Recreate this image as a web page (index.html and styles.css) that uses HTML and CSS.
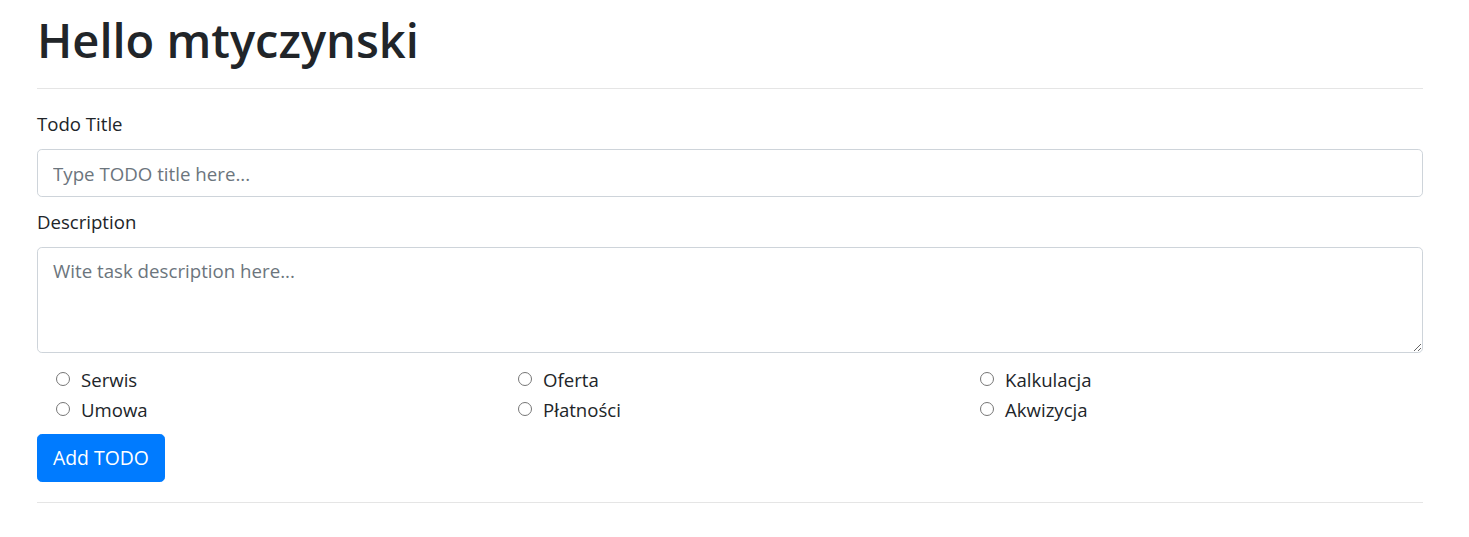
FILE: index.html
```html
<!DOCTYPE html>
<html lang="pl">
<head>
<meta charset="utf-8">
<title>Todo</title>
<link rel="stylesheet" href="styles.css">
</head>
<body>
<div class="container">
  <h1 class="title">Hello mtyczynski</h1>
  <hr class="divider">
  <form class="todo-form">
    <label class="field-label" for="title">Todo Title</label>
    <input class="field-input" id="title" type="text" placeholder="Type TODO title here...">
    <label class="field-label field-label--second" for="desc">Description</label>
    <textarea class="field-input field-textarea" id="desc" placeholder="Wite task description here..."></textarea>
    <div class="radio-grid">
      <label class="radio-item"><input class="radio" type="radio" name="cat"><span>Serwis</span></label>
      <label class="radio-item"><input class="radio" type="radio" name="cat"><span>Oferta</span></label>
      <label class="radio-item"><input class="radio" type="radio" name="cat"><span>Kalkulacja</span></label>
      <label class="radio-item"><input class="radio" type="radio" name="cat"><span>Umowa</span></label>
      <label class="radio-item"><input class="radio" type="radio" name="cat"><span>Płatności</span></label>
      <label class="radio-item"><input class="radio" type="radio" name="cat"><span>Akwizycja</span></label>
    </div>
    <button class="btn-primary" type="button">Add TODO</button>
  </form>
  <hr class="divider divider--bottom">
</div>
</body>
</html>
```
FILE: styles.css
```css
* { box-sizing: border-box; }
html, body { margin: 0; padding: 0; background: #fff; }
body {
  font-family: "Open Sans", "Noto Sans", "DejaVu Sans", sans-serif;
  color: #212529;
  font-size: 18.6px;
  line-height: 30px;
}
.container {
  width: 1386px;
  margin-left: 37px;
  padding-top: 12px;
}
.title {
  margin: 0 0 8px;
  font-size: 47px;
  line-height: 56px;
  font-weight: 600;
}
.divider {
  margin: 20px 0;
  border: 0;
  border-top: 1px solid rgba(0,0,0,.1);
  height: 0;
}
.divider--bottom { margin-top: 20px; }
.todo-form {
  display: flex;
  flex-direction: column;
  align-items: flex-start;
}
.field-label {
  display: block;
  margin-bottom: 10px;
}
.field-label--second { margin-top: 10px; }
.field-input {
  display: block;
  width: 100%;
  height: 48px;
  padding: 8px 15px;
  font-family: inherit;
  font-size: 18.7px;
  line-height: 30px;
  color: #495057;
  background: #fff;
  border: 1px solid #ced4da;
  border-radius: 4.8px;
  outline: none;
  margin: 0;
}
.field-input::placeholder { color: #6c757d; opacity: 1; }
.field-textarea {
  height: 106px;
  resize: vertical;
}
.radio-grid {
  display: grid;
  grid-template-columns: repeat(3, 1fr);
  width: 100%;
  margin-top: 12px;
}
.radio-item {
  display: flex;
  align-items: flex-start;
  height: 30px;
  line-height: 30px;
  padding-left: 19px;
}
.radio {
  appearance: none;
  -webkit-appearance: none;
  width: 14px;
  height: 14px;
  margin: 7px 11px 0 0;
  border: 1px solid #767676;
  border-radius: 50%;
  background: #fff;
  flex: none;
}
.btn-primary {
  margin-top: 9px;
  height: 48px;
  padding: 0 15px;
  font-family: inherit;
  font-size: 19.4px;
  line-height: 30px;
  color: #fff;
  background: #007bff;
  border: 1px solid #007bff;
  border-radius: 4.8px;
  cursor: pointer;
}
```
